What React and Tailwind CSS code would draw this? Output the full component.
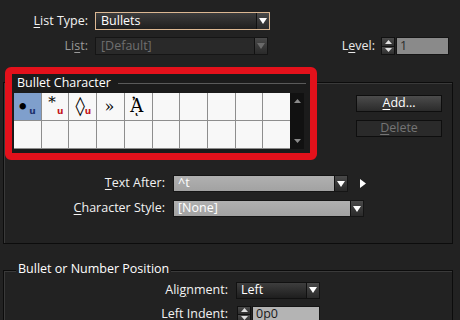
import React from "react";

const Tri = ({ color = "#ffffff", w = 8, h = 6 }) => (
  <svg width={w} height={h} viewBox="0 0 8 6">
    <polygon points="0,0 8,0 4,6" fill={color} />
  </svg>
);

const U = ({ children }) => (
  <span className="underline decoration-1 underline-offset-[2px]">{children}</span>
);

const ArrowBtn = ({ w = "w-[13px]", dim = false }) => (
  <div className={`${w} h-full flex items-center justify-center border-l border-[#111] bg-gradient-to-b from-[#4a4a4a] to-[#2a2a2a]`}>
    <Tri color={dim ? "#6a6a6a" : "#ffffff"} />
  </div>
);

const Spinner = () => (
  <div className="w-[14px] h-full flex flex-col gap-px bg-[#111] border border-[#111]">
    <div className="flex-1 flex items-center justify-center bg-gradient-to-b from-[#4a4a4a] to-[#2e2e2e]">
      <svg width="7" height="4" viewBox="0 0 7 4"><polygon points="0,4 7,4 3.5,0" fill="#ddd" /></svg>
    </div>
    <div className="flex-1 flex items-center justify-center bg-gradient-to-b from-[#4a4a4a] to-[#2e2e2e]">
      <svg width="7" height="4" viewBox="0 0 7 4"><polygon points="0,0 7,0 3.5,4" fill="#ddd" /></svg>
    </div>
  </div>
);

const cells = [
  { ch: "•", u: "#1b2f6a", sel: true, cls: "text-[22px] -ml-[9px] mt-[2px]" },
  { ch: "*", u: "#c4161c", cls: "text-[15px] -ml-[6px] -mt-[8px]" },
  { ch: "◊", u: "#c4161c", cls: "text-[19px] -ml-[5px] -mt-[2px]" },
  { ch: "»", cls: "text-[16px] -ml-[2px]" },
  { ch: "ᾈ", cls: "text-[18px] -ml-[3px] -mt-[2px]" },
];

export default function App() {
  return (
    <div
      className="w-[460px] h-[320px] overflow-hidden bg-[#222222] text-[#f2f2f2] text-[12.5px] leading-none"
      style={{ fontFamily: "'Open Sans', 'Noto Sans', sans-serif" }}
    >
      {/* Row 1 */}
      <div className="flex items-center h-[18px] mt-[12px]">
        <div className="w-[88px] text-right"><U>L</U>ist Type:</div>
        <div className="ml-[7px] w-[175px] h-[18px] flex border border-[#dcb893] bg-gradient-to-b from-[#3c3c3c] to-[#1f1f1f]">
          <div className="flex-1 flex items-center pl-[5px] text-white">Bullets</div>
          <ArrowBtn />
        </div>
      </div>

      {/* Row 2 */}
      <div className="flex items-center h-[18px] mt-[7px] pr-[11px]">
        <div className="w-[88px] text-right text-[#9a9a9a]">Li<U>s</U>t:</div>
        <div className="ml-[7px] w-[173px] h-[18px] flex border border-[#151515] bg-[#292929]">
          <div className="flex-1 flex items-center pl-[5px] text-[#6f6f6f]">[Default]</div>
          <ArrowBtn dim />
        </div>
        <div className="ml-auto text-[#e8e8e8]">L<U>e</U>vel:</div>
        <div className="ml-[6px] h-[18px] flex">
          <Spinner />
          <div className="ml-px w-[53px] h-full bg-[#8a8a8a] border border-[#151515] flex items-center pl-[3px] text-[#2a2a2a]">1</div>
        </div>
      </div>

      {/* Bullet Character group */}
      <div className="ml-[3px] mt-[27px] w-[450px] h-[162px] border border-[#0c0c0c] shadow-[inset_1px_1px_0_#3a3a3a]">
        <div className="flex items-start">
          <div className="ml-px -mt-[16px] w-[312px] h-[93px] border-[7px] border-[#e3111b] rounded-[6px] bg-[#1b1b1b] flex flex-col">
            <div className="h-[19px] flex items-center pl-[5px]">
              <span className="text-white">Bullet Character</span>
              <div className="flex-1 h-px bg-[#5a5a5a] ml-[7px] mr-[4px]" />
            </div>
            <div className="flex pl-[2px]">
              <div className="w-[276px] h-[56px] grid grid-cols-10 grid-rows-2 gap-px bg-[#8e8e8e] border-b border-[#8e8e8e]">
                {Array.from({ length: 20 }).map((_, i) => {
                  const c = cells[i];
                  return (
                    <div
                      key={i}
                      className={`relative flex items-center justify-center text-black overflow-hidden ${c && c.sel ? "bg-[#7f9fcc]" : "bg-[#f8f8f8]"}`}
                      style={{ fontFamily: "'DejaVu Serif', 'Liberation Serif', serif" }}
                    >
                      {c && <span className={c.cls}>{c.ch}</span>}
                      {c && c.u && (
                        <span
                          className="absolute right-[5px] bottom-[4px] text-[9px] font-bold leading-none"
                          style={{ color: c.u, fontFamily: "'DejaVu Sans', sans-serif" }}
                        >
                          u
                        </span>
                      )}
                    </div>
                  );
                })}
              </div>
              <div className="w-[14px] h-[56px] bg-[#111111] flex flex-col items-center justify-between py-[6px]">
                <svg width="7" height="4" viewBox="0 0 7 4"><polygon points="0,4 7,4 3.5,0" fill="#8a8a8a" /></svg>
                <svg width="7" height="4" viewBox="0 0 7 4"><polygon points="0,0 7,0 3.5,4" fill="#8a8a8a" /></svg>
              </div>
            </div>
          </div>
          <div className="ml-[39px] mt-[12px] flex flex-col gap-[8px]">
            <div className="w-[86px] h-[17px] border border-[#0e0e0e] bg-gradient-to-b from-[#4c4c4c] to-[#2b2b2b] flex items-center justify-center text-white">
              <span><U>A</U>dd...</span>
            </div>
            <div className="w-[86px] h-[17px] border border-[#0e0e0e] bg-[#2a2a2a] flex items-center justify-center text-[#747474]">
              <span><U>D</U>elete</span>
            </div>
          </div>
        </div>

        {/* Text After */}
        <div className="flex items-center h-[17px] mt-[15px]">
          <div className="w-[161px] text-right"><U>T</U>ext After:</div>
          <div className="ml-[8px] h-full flex border border-[#151515]">
            <div className="w-[160px] h-full bg-gradient-to-b from-[#b0b0b0] to-[#a2a2a2] flex items-center pl-[4px] text-white">^t</div>
            <ArrowBtn />
          </div>
          <div className="ml-[12px]">
            <svg width="6" height="9" viewBox="0 0 6 9"><polygon points="0,0 6,4.5 0,9" fill="#ffffff" /></svg>
          </div>
        </div>

        {/* Character Style */}
        <div className="flex items-center h-[17px] mt-[8px]">
          <div className="w-[161px] text-right"><U>C</U>haracter Style:</div>
          <div className="ml-[8px] h-full flex border border-[#151515]">
            <div className="w-[176px] h-full bg-gradient-to-b from-[#b0b0b0] to-[#a2a2a2] flex items-center pl-[4px] text-white">[None]</div>
            <ArrowBtn />
          </div>
        </div>
      </div>

      {/* Bullet or Number Position group */}
      <div className="ml-[3px] mt-[26px] w-[450px] h-[80px] border-t border-l border-r border-[#0c0c0c] shadow-[inset_1px_1px_0_#3a3a3a]">
        <div className="-mt-[8px] ml-[12px] w-fit px-[2px] bg-[#222222] text-white">Bullet or Number Position</div>
        <div className="flex items-center h-[17px] mt-[6px]">
          <div className="w-[224px] text-right">Ali<U>g</U>nment:</div>
          <div className="ml-[8px] w-[84px] h-full flex border border-[#111] bg-gradient-to-b from-[#3e3e3e] to-[#1e1e1e]">
            <div className="flex-1 flex items-center pl-[4px] text-white">Left</div>
            <ArrowBtn />
          </div>
        </div>
        <div className="flex items-center h-[17px] mt-[7px]">
          <div className="w-[224px] text-right">Left Indent:</div>
          <div className="ml-[9px] h-full flex">
            <Spinner />
            <div className="ml-px w-[68px] h-full bg-[#b4b4b4] border border-[#151515] flex items-center pl-[3px] text-[#1a1a1a]">0p0</div>
          </div>
        </div>
      </div>
    </div>
  );
}
